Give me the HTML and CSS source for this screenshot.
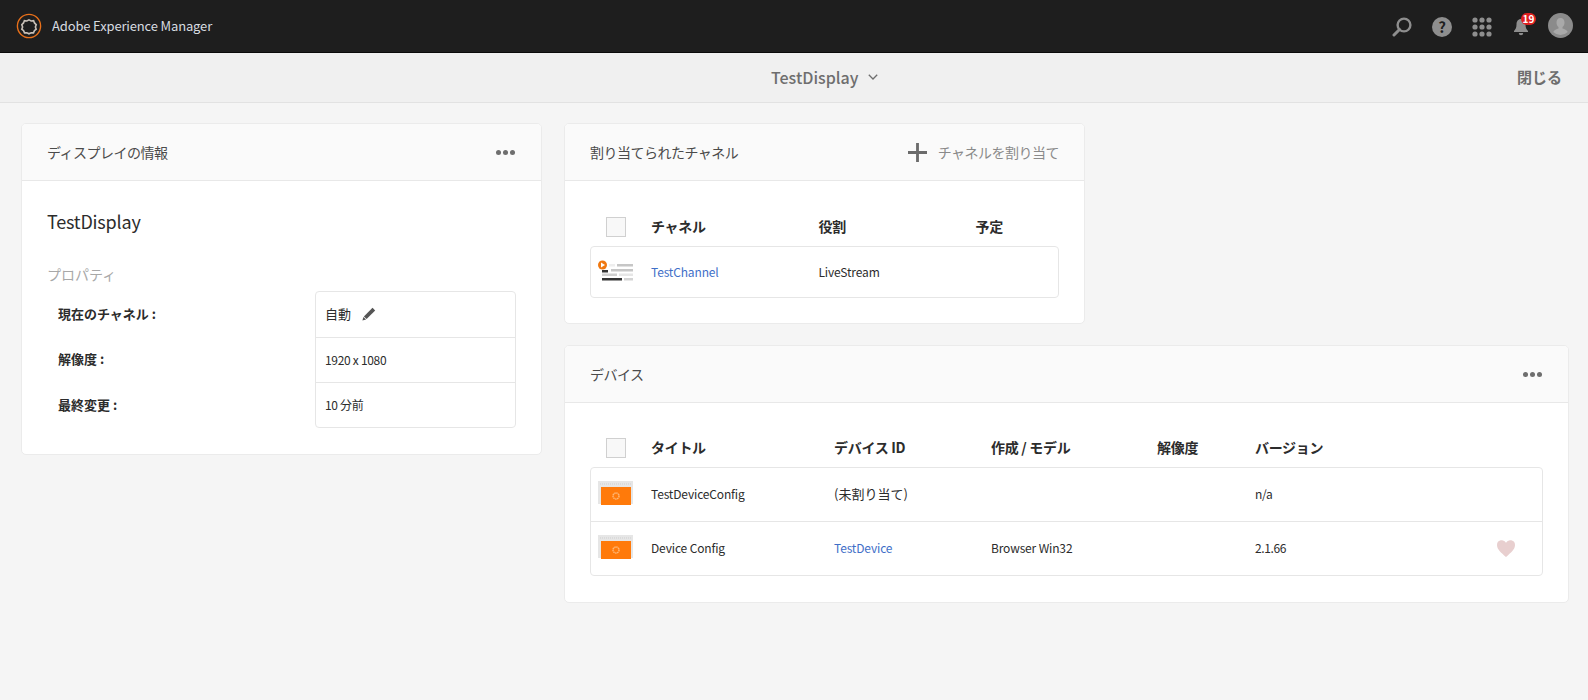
FILE: index.html
```html
<!DOCTYPE html>
<html lang="ja">
<head>
    <meta charset="UTF-8">
    <title>TestDisplay</title>
    <link rel="stylesheet" href="styles.css">
</head>
<body>
    <header class="topbar">
        <div class="brand">
            <svg class="brand-logo" width="26" height="26" viewBox="0 0 26 26">
                <circle cx="13" cy="13" r="11.6" fill="none" stroke="#e8701a" stroke-width="1.4"/>
                <path d="M13 6.2l2.4 1.2 2.7-.3 1 2.5 1.9 1.900-.9 2.500.9 2.500-2 1.800-1 2.400-2.600-.2-2.400 1.200-2.400-1.200-2.600.2-1-2.400-2-1.800.9-2.500-.9-2.500 1.900-1.900 1-2.500 2.700.3z" transform="translate(1.300 1.300) scale(.9)" fill="none" stroke="#c9c1b8" stroke-width="1.800"/>
            </svg>
            <span>Adobe Experience Manager</span>
        </div>
        <div class="top-icons">
            <svg width="20" height="20" viewBox="0 0 20 20">
                <circle cx="12" cy="8" r="6.400" fill="none" stroke="#8e8e8e" stroke-width="2.400"/>
                <path d="M7.500 12.500L2 18" stroke="#8e8e8e" stroke-width="3" stroke-linecap="round"/>
            </svg>
            <div class="help">?</div>
            <svg width="20" height="20" viewBox="0 0 20 20" fill="#8e8e8e">
                <circle cx="3" cy="3" r="2.600"/><circle cx="10" cy="3" r="2.600"/><circle cx="17" cy="3" r="2.600"/>
                <circle cx="3" cy="10" r="2.600"/><circle cx="10" cy="10" r="2.600"/><circle cx="17" cy="10" r="2.600"/>
                <circle cx="3" cy="17" r="2.600"/><circle cx="10" cy="17" r="2.600"/><circle cx="17" cy="17" r="2.600"/>
            </svg>
            <div class="bell">
                <svg width="16" height="18" viewBox="0 0 16 18" fill="#8e8e8e">
                    <path d="M8 1c-3 0-4.500 2.400-4.500 5.500 0 3.500-1.100 5-2.500 6.500v1h14v-1c-1.400-1.500-2.500-3-2.500-6.500C12.500 3.400 11 1 8 1z"/>
                    <path d="M5.800 15h4.400a2.200 2.200 0 0 1-4.400 0z"/>
                </svg>
                <span class="badge">19</span>
            </div>
            <svg class="avatar" width="25" height="25" viewBox="0 0 25 25">
                <circle cx="12.500" cy="12.500" r="12.500" fill="#8b8b8b"/>
                <path d="M12.500 5c-2.600 0-4 2-4 4.500 0 2 .8 3.600 2 4.600v1.400c-2 .8-4.500 1.500-5.300 3.500a10.500 10.500 0 0 0 14.600 0c-.8-2-3.300-2.700-5.300-3.500v-1.400c1.200-1 2-2.600 2-4.600 0-2.500-1.400-4.500-4-4.500z" fill="#a9a9a9"/>
            </svg>
        </div>
    </header>

    <div class="subbar">
        <div class="subbar-title">
            TestDisplay
            <svg width="10" height="6" viewBox="0 0 10 6"><path d="M.8.8L5 5l4.200-4.200" fill="none" stroke="#6e6e6e" stroke-width="1.300"/></svg>
        </div>
        <div class="subbar-close">閉じる</div>
    </div>

    <main class="content">
        <section class="card card-info">
            <div class="card-head">
                <span>ディスプレイの情報</span>
                <span class="dots"><i></i><i></i><i></i></span>
            </div>
            <div class="card-body">
                <h2 class="display-name">TestDisplay</h2>
                <h3 class="props-title">プロパティ</h3>
                <div class="props">
                    <div class="props-labels">
                        <div>現在のチャネル :</div>
                        <div>解像度 :</div>
                        <div>最終変更 :</div>
                    </div>
                    <div class="props-values">
                        <div class="value-first">
                            自動
                            <svg width="14" height="14" viewBox="0 0 14 14" fill="#555"><path d="M10.500.8l2.700 2.700-8.600 8.600-2.700-2.700z"/><path d="M1.400 9.900l2.700 2.700-3.700 1z"/></svg>
                        </div>
                        <div>1920 x 1080</div>
                        <div>10 分前</div>
                    </div>
                </div>
            </div>
        </section>

        <div class="right-col">
            <section class="card card-channels">
                <div class="card-head">
                    <span>割り当てられたチャネル</span>
                    <span class="assign">
                        <svg width="19" height="19" viewBox="0 0 20 20" fill="#6b6b6b"><path d="M8.500 0h3v8.500H20v3h-8.500V20h-3v-8.500H0v-3h8.500z"/></svg>
                        チャネルを割り当て
                    </span>
                </div>
                <div class="card-body table-body">
                    <div class="row-head channel-cols">
                        <span class="check"></span>
                        <span>チャネル</span>
                        <span>役割</span>
                        <span>予定</span>
                    </div>
                    <div class="rows">
                        <div class="row channel-cols channel-row">
                            <svg width="36" height="26" viewBox="0 0 36 26">
                                <rect x="11" y="5" width="6" height="2.500" fill="#eee"/>
                                <rect x="19" y="5" width="16" height="2.500" fill="#c6c6c6"/>
                                <rect x="13" y="10" width="22" height="2.500" fill="#c6c6c6"/>
                                <path d="M4 11l6 0 0 2.500-6 0z" fill="#333"/>
                                <rect x="4" y="14.500" width="15" height="2.500" fill="#cfcfcf"/>
                                <rect x="21" y="14.500" width="14" height="2.500" fill="#e6e6e6"/>
                                <rect x="4" y="19" width="20" height="2.500" fill="#333"/>
                                <rect x="26" y="19" width="9" height="2.500" fill="#d4d4d4"/>
                                <circle cx="4.500" cy="6" r="4.500" fill="#f07810"/>
                                <path d="M3 3.500l4 2.500-4 2.500z" fill="#fff"/>
                            </svg>
                            <a class="link">TestChannel</a>
                            <span>LiveStream</span>
                            <span></span>
                        </div>
                    </div>
                </div>
            </section>

            <section class="card">
                <div class="card-head">
                    <span>デバイス</span>
                    <span class="dots"><i></i><i></i><i></i></span>
                </div>
                <div class="card-body table-body device-table">
                    <div class="row-head device-cols">
                        <span class="check"></span>
                        <span>タイトル</span>
                        <span>デバイス ID</span>
                        <span>作成 / モデル</span>
                        <span>解像度</span>
                        <span>バージョン</span>
                    </div>
                    <div class="rows">
                        <div class="row device-cols device-row">
                            <svg width="36" height="26" viewBox="0 0 36 26">
                                <rect x="0" y="0" width="35" height="23" fill="#e6e6e6"/>
                                <path d="M2 3h31" stroke="#cfcfcf" stroke-dasharray="1 1"/>
                                <rect x="3" y="6" width="30" height="18" fill="#ff7a0a"/>
                                <circle cx="18" cy="15" r="3" fill="none" stroke="#ffb673" stroke-width="1.500" stroke-dasharray="1.500 .5"/>
                            </svg>
                            <span>TestDeviceConfig</span>
                            <span class="unassigned">(未割り当て)</span>
                            <span></span>
                            <span></span>
                            <span class="version">n/a</span>
                            <span></span>
                        </div>
                        <div class="row device-cols device-row">
                            <svg width="36" height="26" viewBox="0 0 36 26">
                                <rect x="0" y="0" width="35" height="23" fill="#e6e6e6"/>
                                <path d="M2 3h31" stroke="#cfcfcf" stroke-dasharray="1 1"/>
                                <rect x="3" y="6" width="30" height="18" fill="#ff7a0a"/>
                                <circle cx="18" cy="15" r="3" fill="none" stroke="#ffb673" stroke-width="1.500" stroke-dasharray="1.500 .5"/>
                            </svg>
                            <span>Device Config</span>
                            <a class="link">TestDevice</a>
                            <span>Browser Win32</span>
                            <span></span>
                            <span class="version">2.1.66</span>
                            <svg class="heart" width="18" height="17" viewBox="0 0 18 17" fill="#e8cfcf"><path d="M9 17C4 12.500 0 9.500 0 5a4.800 4.800 0 0 1 9-2.300A4.800 4.800 0 0 1 18 5c0 4.500-4 7.500-9 12z"/></svg>
                        </div>
                    </div>
                </div>
            </section>
        </div>
    </main>
</body>
</html>
```

FILE: styles.css
```css
body {
    margin: 0;
    height: 700px;
    overflow: hidden;
    background: #f5f5f5;
    color: #2c2c2c;
    font-family: "Noto Sans CJK JP", "Open Sans", sans-serif;
    font-size: 13px;
    line-height: 20px;
}
.topbar {
    height: 52px;
    background: #1e1e1e;
    border-bottom: 1px solid #0a0a0a;
    display: flex;
    align-items: center;
    justify-content: space-between;
    padding: 0 15px 0 16px;
}
.brand {
    display: flex;
    align-items: center;
    gap: 10px;
    color: #d8dce0;
    font-size: 13px;
    letter-spacing: -0.15px;
}
.top-icons {
    display: flex;
    align-items: center;
    gap: 20px;
    padding-top: 2px;
}
.help {
    width: 20px;
    height: 20px;
    border-radius: 50%;
    background: #8e8e8e;
    color: #1e1e1e;
    font-size: 15px;
    font-weight: 700;
    line-height: 20px;
    text-align: center;
}
.bell {
    position: relative;
    width: 16px;
    height: 18px;
    margin-left: 1px;
    margin-right: -1px;
}
.badge {
    position: absolute;
    left: 8px;
    top: -5px;
    width: 15px;
    height: 12px;
    border-radius: 6px;
    background: #e02020;
    color: #fff;
    font-size: 10px;
    font-weight: 700;
    line-height: 12px;
    text-align: center;
}
.avatar {
    margin-bottom: 4px;
}
.subbar {
    height: 47px;
    background: #f0f0f0;
    border-bottom: 1px solid #e2e2e2;
    display: flex;
    align-items: center;
    justify-content: space-between;
    padding: 0 26px 2px 771px;
    color: #6e6e6e;
    font-size: 16px;
    font-weight: 500;
}
.subbar-title {
    display: flex;
    align-items: center;
    gap: 10px;
}
.subbar-close {
    font-weight: 700;
    font-size: 15px;
}
.content {
    display: flex;
    align-items: flex-start;
    gap: 22px;
    padding: 20px 19px 0 21px;
}
.card {
    background: #fff;
    border: 1px solid #ebebeb;
    border-radius: 5px;
    overflow: hidden;
}
.card-info {
    width: 519px;
    flex: none;
}
.right-col {
    flex: 1;
    display: flex;
    flex-direction: column;
    gap: 21px;
}
.card-channels {
    width: 519px;
}
.card-head {
    height: 56px;
    background: #fafafa;
    border-bottom: 1px solid #e8e8e8;
    display: flex;
    align-items: center;
    justify-content: space-between;
    padding: 0 25px;
    color: #4b4b4b;
    font-size: 14px;
    letter-spacing: -0.5px;
}
.dots {
    display: flex;
    gap: 2px;
    margin-right: 1px;
}
.dots i {
    width: 5px;
    height: 5px;
    border-radius: 50%;
    background: #6e6e6e;
}
.assign {
    display: flex;
    align-items: center;
    gap: 11px;
    color: #8a8a8a;
}
.card-body {
    padding: 27px 25px 26px;
}
.display-name {
    margin: 0;
    font-size: 18px;
    font-weight: 400;
    line-height: 26px;
    letter-spacing: -0.2px;
}
.props-title {
    margin: 30px 0 7px;
    color: #a8a8a8;
    font-size: 14px;
    font-weight: 400;
}
.props {
    display: flex;
    justify-content: space-between;
}
.props-labels {
    padding-left: 11px;
    font-weight: 700;
}
.props-labels div {
    height: 45.5px;
    display: flex;
    align-items: center;
}
.props-values {
    width: 199px;
    border: 1px solid #e6e6e6;
    border-radius: 4px;
    font-size: 12px;
    letter-spacing: -0.3px;
}
.props-values div {
    box-sizing: border-box;
    height: 45px;
    display: flex;
    align-items: center;
    padding-left: 9px;
    border-top: 1px solid #e6e6e6;
}
.props-values .value-first {
    border-top: 0;
    gap: 11px;
    padding-bottom: 2px;
    font-size: 13px;
    letter-spacing: 0;
}
.table-body {
    padding-top: 26px;
    padding-bottom: 25px;
}
.device-table {
    padding-bottom: 26px;
}
.row-head {
    height: 39px;
    align-items: center;
    font-size: 14px;
    font-weight: 700;
    letter-spacing: -0.3px;
    padding-left: 1px;
}
.row-head span:not(.check) {
    margin-bottom: 2px;
}
.device-table .row-head {
    height: 38px;
}
.channel-cols {
    display: grid;
    grid-template-columns: 60px 167.5px 157px 1fr;
    align-items: center;
}
.device-cols {
    display: grid;
    grid-template-columns: 60px 183px 157px 166px 98px 1fr 45px;
    align-items: center;
}
.check {
    width: 18px;
    height: 18px;
    margin-left: 15px;
    background: #f8f8f8;
    border: 1px solid #d0d0d0;
}
.rows {
    border: 1px solid #e6e6e6;
    border-radius: 4px;
}
.row {
    font-size: 12px;
    letter-spacing: -0.15px;
}
.channel-row {
    height: 50px;
}
.device-row {
    height: 51px;
    padding-bottom: 2px;
}
.device-row + .device-row {
    border-top: 1px solid #e6e6e6;
}
.row > svg:first-child {
    margin-left: 7px;
}
.heart {
    margin-top: 2px;
}
.unassigned {
    font-size: 13px;
    letter-spacing: 0;
}
.version {
    letter-spacing: -0.4px;
}
.link {
    color: #3f6fc8;
}
```
